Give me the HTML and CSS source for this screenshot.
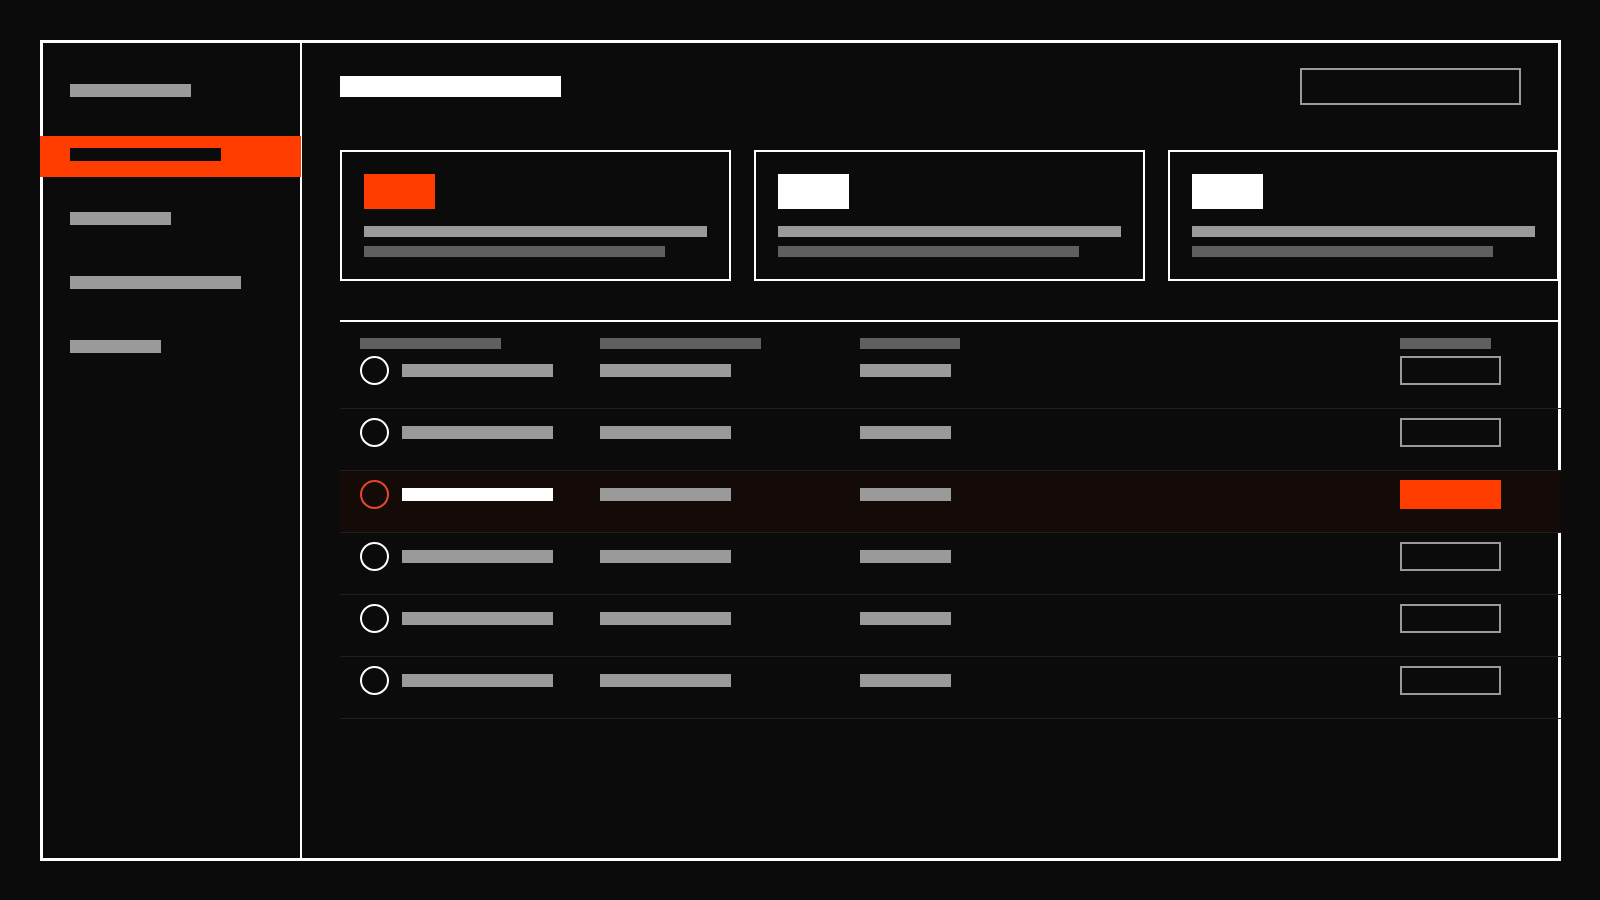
FILE: index.html
```html
<!DOCTYPE html>
<html lang="en">
<head>
<meta charset="utf-8">
<title>Dashboard wireframe</title>
<link rel="stylesheet" href="styles.css">
</head>
<body>
<div class="frame">
  <aside class="sidebar">
    <div class="nav-item"><span class="bar gray w121"></span></div>
    <div class="nav-item active"><span class="bar dark w151"></span></div>
    <div class="nav-item"><span class="bar gray w101"></span></div>
    <div class="nav-item"><span class="bar gray w171"></span></div>
    <div class="nav-item"><span class="bar gray w91"></span></div>
  </aside>
  <main class="main">
    <header class="header">
      <div class="title"></div>
      <div class="search"></div>
    </header>
    <section class="cards">
      <div class="card">
        <div class="chip orange"></div>
        <div class="line light"></div>
        <div class="line mid short"></div>
      </div>
      <div class="card">
        <div class="chip white"></div>
        <div class="line light"></div>
        <div class="line mid short"></div>
      </div>
      <div class="card">
        <div class="chip white"></div>
        <div class="line light"></div>
        <div class="line mid short"></div>
      </div>
    </section>
    <section class="table">
      <div class="thead">
        <span class="hbar w141"></span>
        <span class="hbar w161"></span>
        <span class="hbar w100"></span>
        <span class="hbar w91"></span>
      </div>
      <div class="row">
        <div class="cell-main"><span class="radio"></span><span class="cbar w151"></span></div>
        <div class="cell"><span class="cbar w131"></span></div>
        <div class="cell"><span class="cbar w91"></span></div>
        <div class="cell"><span class="btn"></span></div>
      </div>
      <div class="row">
        <div class="cell-main"><span class="radio"></span><span class="cbar w151"></span></div>
        <div class="cell"><span class="cbar w131"></span></div>
        <div class="cell"><span class="cbar w91"></span></div>
        <div class="cell"><span class="btn"></span></div>
      </div>
      <div class="row selected">
        <div class="cell-main"><span class="radio"></span><span class="cbar w151"></span></div>
        <div class="cell"><span class="cbar w131"></span></div>
        <div class="cell"><span class="cbar w91"></span></div>
        <div class="cell"><span class="btn"></span></div>
      </div>
      <div class="row">
        <div class="cell-main"><span class="radio"></span><span class="cbar w151"></span></div>
        <div class="cell"><span class="cbar w131"></span></div>
        <div class="cell"><span class="cbar w91"></span></div>
        <div class="cell"><span class="btn"></span></div>
      </div>
      <div class="row">
        <div class="cell-main"><span class="radio"></span><span class="cbar w151"></span></div>
        <div class="cell"><span class="cbar w131"></span></div>
        <div class="cell"><span class="cbar w91"></span></div>
        <div class="cell"><span class="btn"></span></div>
      </div>
      <div class="row">
        <div class="cell-main"><span class="radio"></span><span class="cbar w151"></span></div>
        <div class="cell"><span class="cbar w131"></span></div>
        <div class="cell"><span class="cbar w91"></span></div>
        <div class="cell"><span class="btn"></span></div>
      </div>
    </section>
  </main>
</div>
</body>
</html>
```

FILE: styles.css
```css
* { box-sizing: border-box; }
html, body {
  margin: 0;
  padding: 0;
  background: #0b0b0b;
  font-family: "Liberation Sans", Arial, sans-serif;
}
body {
  width: 1600px;
  height: 900px;
  padding: 40px 0 0 40px;
}
.frame {
  width: 1521px;
  height: 821px;
  border: 3px solid #fff;
  display: flex;
  background: #0b0b0b;
}

/* sidebar */
.sidebar {
  width: 259px;
  flex: none;
  border-right: 2px solid #fff;
  padding-top: 29px;
  display: flex;
  flex-direction: column;
  gap: 23px;
}
.nav-item {
  height: 41px;
  padding: 12px 0 0 27px;
}
.nav-item.active {
  background: #ff3d00;
  margin: 0 -1px 0 -3px;
  padding-left: 30px;
}
.bar {
  display: block;
  height: 13px;
}
.bar.gray { background: #9a9a9a; }
.bar.dark { background: #0b0b0b; }
.w121 { width: 121px; }
.w151 { width: 151px; }
.w101 { width: 101px; }
.w171 { width: 171px; }
.w91 { width: 91px; }
.w141 { width: 141px; }
.w161 { width: 161px; }
.w100 { width: 100px; }
.w131 { width: 131px; }

/* main */
.main {
  flex: 1;
  min-width: 0;
  padding: 25px 0 0 38px;
}
.header {
  display: flex;
  justify-content: space-between;
  align-items: center;
  padding-right: 37px;
}
.title {
  width: 221px;
  height: 21px;
  background: #fff;
}
.search {
  width: 221px;
  height: 37px;
  border: 2px solid #9a9a9a;
}

.cards {
  margin-top: 45px;
  display: grid;
  grid-template-columns: repeat(3, 391px);
  gap: 23px;
}
.card {
  height: 131px;
  border: 2px solid #fff;
  padding: 22px;
}
.chip {
  width: 71px;
  height: 35px;
  margin-bottom: 17px;
}
.chip.orange { background: #ff3d00; }
.chip.white { background: #fff; }
.line {
  height: 11px;
}
.line.light { background: #9a9a9a; }
.line.mid { background: #5f5f5f; margin-top: 9px; }
.line.short { width: 301px; }

/* table */
.table {
  margin-top: 39px;
  margin-right: -3px;
  border-top: 2px solid #fff;
}
.thead,
.row {
  display: grid;
  grid-template-columns: 240px 260px 540px 1fr;
  padding-left: 20px;
}
.thead {
  padding-top: 16px;
  margin-bottom: -2px;
}
.hbar {
  display: block;
  height: 11px;
  background: #5f5f5f;
}
.row {
  padding-top: 9px;
  padding-bottom: 23px;
  border-bottom: 1px solid #1f1f1f;
  align-items: center;
}
.row.selected { background: #140b09; }
.cell-main {
  display: flex;
  align-items: center;
  gap: 13px;
}
.cell {
  display: flex;
  align-items: center;
}
.radio {
  display: block;
  width: 29px;
  height: 29px;
  border: 2px solid #fff;
  border-radius: 50%;
}
.cbar {
  display: block;
  height: 13px;
  background: #9a9a9a;
}
.btn {
  display: block;
  width: 101px;
  height: 29px;
  border: 2px solid #9a9a9a;
}
.row.selected .radio { border-color: #e5482b; }
.row.selected .cell-main .cbar { background: #fff; }
.row.selected .btn { background: #ff3d00; border-color: #ff3d00; }
```
